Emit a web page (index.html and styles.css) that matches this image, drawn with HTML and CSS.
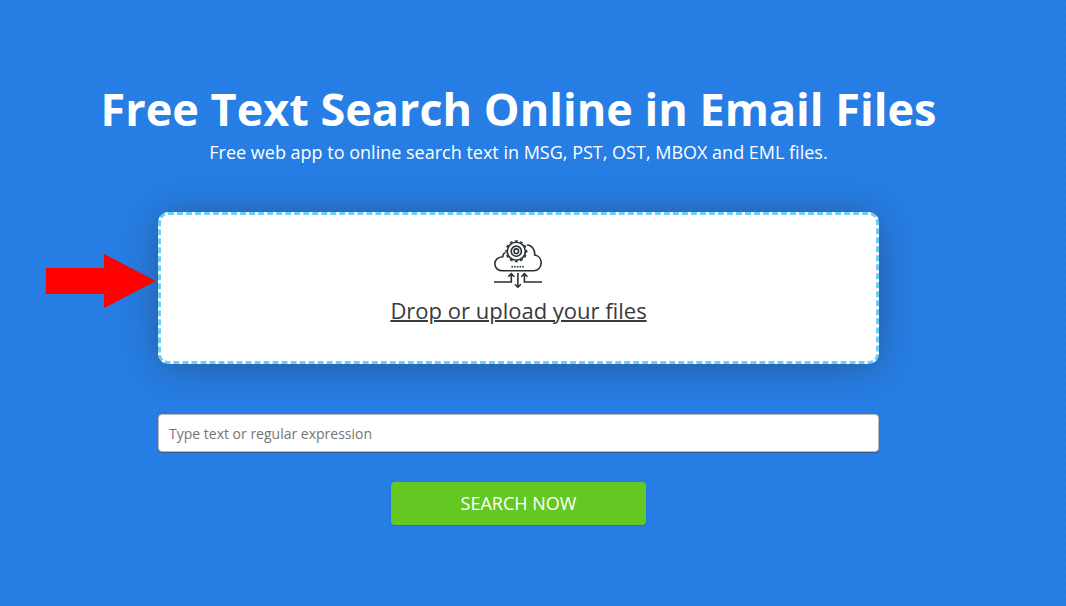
FILE: index.html
```html
<!DOCTYPE html>
<html lang="en">
<head>
<meta charset="utf-8">
<title>Free Text Search Online in Email Files</title>
<link rel="stylesheet" href="styles.css">
</head>
<body>
<main class="page">
  <h1 class="title">Free Text Search Online in Email Files</h1>
  <p class="subtitle">Free web app to online search text in MSG, PST, OST, MBOX and EML files.</p>
  <form class="search">
    <div class="dropzone">
      <svg class="pointer" viewBox="0 0 110 54"><path fill="#f00" d="M0 14h58V0l52 27-52 27V40H0z"/></svg>
      <svg class="cloud" viewBox="0 0 48 48" fill="none" stroke="#2b3135" stroke-width="1.6">
        <path d="M11 12.7C9.2 13.4 8.8 14.4 8.8 16.7C4 17 .8 20 .8 23.8C.8 27.8 4 30.8 8.5 30.8H39.5C44 30.8 47.2 27.2 47.2 22.8C47.2 18.8 44.5 15.7 40.7 15C41 9.6 38 5.2 33 4.7"/>
        <g transform="translate(22.3 11.2)">
          <circle r="9"/>
          <circle r="10.3" stroke-width="1.5" pathLength="120" stroke-dasharray="5.4 4.6" stroke-dashoffset="2.7"/>
          <circle r="5.1"/><circle r="2.3"/>
        </g>
        <path stroke-dasharray="1.6 1.1" d="M17.4 26.8h12.8"/>
        <path d="M0 42h17.3V34M14.3 36.7l3-3 3 3M23.9 33v14M20.9 44.2l3 3 3-3M48 42H30.4V34M27.4 36.7l3-3 3 3"/>
      </svg>
      <a class="upload">Drop or upload your files</a>
    </div>
    <input class="query" type="text" placeholder="Type text or regular expression">
    <button class="submit" type="button">SEARCH NOW</button>
  </form>
</main>
</body>
</html>
```
FILE: styles.css
```css
* { box-sizing: border-box; }
body {
  margin: 0;
  min-height: 606px;
  font-family: "Open Sans", sans-serif;
  color: #fff;
  background: linear-gradient(135deg, #257be1 12.5%, #277ee5 12.5% 50%, #257be1 50% 62.5%, #277ee5 62.5%) 0 0 / 8px 8px;
}
.page {
  width: 1037px;
  padding-top: 78px;
  display: flex;
  flex-direction: column;
  align-items: center;
}
.title { margin: 0; font-size: 45px; line-height: 62px; font-weight: 700; white-space: nowrap; }
.subtitle { margin: 0; font-size: 18px; line-height: 25px; white-space: nowrap; }
.search {
  width: 721px;
  margin-top: 47px;
  display: flex;
  flex-direction: column;
  align-items: center;
}
.dropzone {
  position: relative;
  width: 100%;
  height: 152px;
  padding-top: 25px;
  display: flex;
  flex-direction: column;
  align-items: center;
  background: #fff;
  border: 3px dashed #6dcff6;
  border-radius: 10px;
  box-shadow: 0 3px 42px -5px rgba(40, 40, 40, .5);
}
.pointer { position: absolute; left: -115px; top: 39px; width: 110px; height: 54px; }
.cloud { width: 48px; height: 48px; margin-right: 1px; }
.upload {
  margin-top: 6px;
  font-size: 22px;
  font-weight: 400;
  line-height: 32px;
  color: #3a3a3c;
  text-decoration: underline;
  text-decoration-thickness: 2px;
  white-space: nowrap;
}
.query {
  width: 100%;
  height: 38px;
  margin-top: 50px;
  padding: 0 10px;
  border: 1px solid #bbb;
  border-radius: 4px;
  background: #fff;
  box-shadow: 0 1px 1px rgba(70, 70, 70, .6);
  font: 400 14px "Open Sans", sans-serif;
}
.query::placeholder { color: #757575; }
.submit {
  width: 255px;
  height: 43px;
  margin-top: 30px;
  padding: 0 0 2px;
  border: 0;
  border-radius: 4px;
  background: #65c721;
  box-shadow: 0 1px 1px rgba(50, 70, 90, .25);
  color: #fff;
  font: 400 18px "Open Sans", sans-serif;
}
```
